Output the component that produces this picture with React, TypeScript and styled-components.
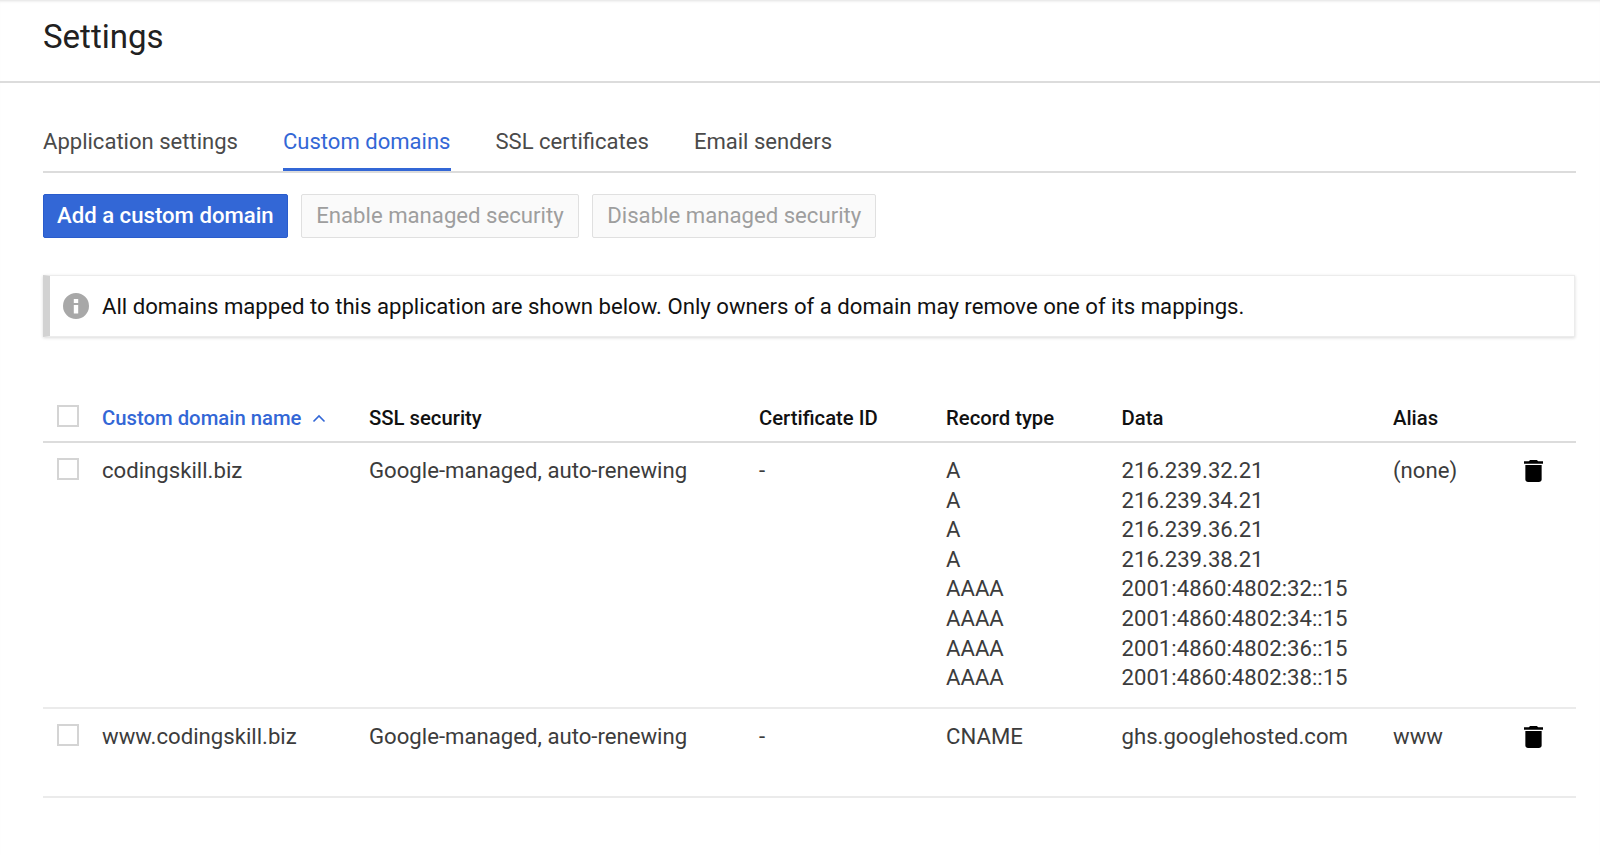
import React from 'react';
import styled, { createGlobalStyle } from 'styled-components';

const Global = createGlobalStyle`
  html, body { margin: 0; padding: 0; background: #fff; }
  body { font-family: Roboto, "Liberation Sans", sans-serif; color: #3c3c3c; overflow: hidden; }
`;
const Page = styled.div`
  width: 1600px;
  height: 855px;
  box-shadow: inset 0 3px 3px -2px rgba(0,0,0,.12);
`;
const Header = styled.header`
  height: 83px;
  box-sizing: border-box;
  border-bottom: 2px solid #dcdcdc;
  padding: 17px 43px 0;
`;
const Title = styled.h1`
  margin: 0;
  font-size: 33px;
  line-height: 40px;
  font-weight: 400;
  color: #212121;
`;
const Content = styled.main`
  padding: 44px 24px 0 43px;
`;
const Tabs = styled.nav`
  display: flex;
  gap: 45px;
  height: 46px;
  box-sizing: border-box;
  border-bottom: 2px solid #dcdcdc;
`;
const Tab = styled.div<{ $active?: boolean }>`
  height: 44px;
  box-sizing: border-box;
  font-size: 22.05px;
  line-height: 29px;
  color: ${p => (p.$active ? '#3367d6' : '#4a4a4a')};
  border-bottom: ${p => (p.$active ? '3px solid #3367d6' : '0')};
`;
const Toolbar = styled.div`
  display: flex;
  gap: 13.5px;
  margin-top: 21px;
`;
const Button = styled.button<{ $primary?: boolean }>`
  height: 44px;
  padding: 0 ${p => (p.$primary ? 13 : 14)}px 2px;
  border-radius: 2px;
  font-family: inherit;
  font-size: 22.16px;
  border: 1px solid ${p => (p.$primary ? '#2a5ccc' : '#e0e0e0')};
  background: ${p => (p.$primary ? '#3367d6' : '#fafafa')};
  color: ${p => (p.$primary ? '#fff' : '#9e9e9e')};
  font-weight: ${p => (p.$primary ? 500 : 400)};
`;
const Notice = styled.div`
  margin: 37px 1px 0 0;
  height: 62px;
  box-sizing: border-box;
  display: flex;
  align-items: center;
  gap: 13px;
  padding-left: 13px;
  border: 1px solid #ececec;
  border-left: 7px solid #d2d2d2;
  box-shadow: 0 1px 3px rgba(0,0,0,.15);
  font-size: 22.16px;
  color: #111;
`;
const InfoIcon = styled.svg`
  width: 26px;
  height: 26px;
  fill: #a8a8a8;
  flex: none;
`;
const GridRow = styled.div<{ $head?: boolean; $pad?: number; $h?: number }>`
  display: grid;
  grid-template-columns: 59px 267px 390px 187px 175.5px 271.5px 131px 1fr;
  box-sizing: border-box;
  padding-top: ${p => p.$pad ?? 13}px;
  height: ${p => p.$h}px;
  border-bottom: 2px solid ${p => (p.$head ? '#dcdcdc' : '#ebebeb')};
  font-size: 22.16px;
  line-height: 29.6px;
`;
const Head = styled(GridRow)`
  margin-top: 55px;
  font-weight: 500;
  font-size: 20.3px;
  color: #111;
`;
const Cell = styled.div``;
const CheckCell = styled.div<{ $top: number }>`
  padding: ${p => p.$top}px 0 0 14px;
`;
const Check = styled.div`
  width: 22px;
  height: 22px;
  box-sizing: border-box;
  border: 2px solid #d4d4d4;
`;
const SortCell = styled.div`
  color: #3367d6;
  display: flex;
  align-items: center;
  gap: 11px;
  height: 29.6px;
`;
const Chevron = styled.svg`
  width: 14px;
  height: 9px;
  fill: none;
  stroke: #3367d6;
  stroke-width: 1.6;
`;
const TrashCell = styled.div`
  padding-top: 4px;
`;
const Trash = styled.svg`
  display: block;
  width: 19px;
  height: 22px;
  fill: #000;
`;

const TrashIcon = () => (
  <Trash viewBox="5 3 14 18" preserveAspectRatio="none">
    <path d="M6 19c0 1.1.9 2 2 2h8c1.1 0 2-.9 2-2V7H6v12zM19 4h-3.5l-1-1h-5l-1 1H5v2h14V4z" />
  </Trash>
);
const lines = (items: string[]) => items.map((t, i) => <div key={i}>{t}</div>);

export default function App() {
  return (
    <Page>
      <Global />
      <Header><Title>Settings</Title></Header>
      <Content>
        <Tabs>
          <Tab>Application settings</Tab>
          <Tab $active>Custom domains</Tab>
          <Tab>SSL certificates</Tab>
          <Tab>Email senders</Tab>
        </Tabs>
        <Toolbar>
          <Button $primary>Add a custom domain</Button>
          <Button>Enable managed security</Button>
          <Button>Disable managed security</Button>
        </Toolbar>
        <Notice>
          <InfoIcon viewBox="0 0 26 26">
            <path fillRule="evenodd" d="M13 0a13 13 0 1 0 0 26a13 13 0 1 0 0-26zM10.8 6h4.4v4h-4.4zM10.8 12h4.4v8.5h-4.4z" />
          </InfoIcon>
          All domains mapped to this application are shown below. Only owners of a domain may remove one of its mappings.
        </Notice>
        <Head $head $h={51} $pad={12}>
          <CheckCell $top={1}><Check /></CheckCell>
          <SortCell>
            Custom domain name
            <Chevron viewBox="0 0 14 9"><polyline points="1.5,7.5 7,2 12.5,7.5" /></Chevron>
          </SortCell>
          <Cell>SSL security</Cell>
          <Cell>Certificate ID</Cell>
          <Cell>Record type</Cell>
          <Cell>Data</Cell>
          <Cell>Alias</Cell>
        </Head>
        <GridRow $h={266} $pad={13}>
          <CheckCell $top={2}><Check /></CheckCell>
          <Cell>codingskill.biz</Cell>
          <Cell>Google-managed, auto-renewing</Cell>
          <Cell>-</Cell>
          <Cell>{lines(['A', 'A', 'A', 'A', 'AAAA', 'AAAA', 'AAAA', 'AAAA'])}</Cell>
          <Cell>{lines(['216.239.32.21', '216.239.34.21', '216.239.36.21', '216.239.38.21', '2001:4860:4802:32::15', '2001:4860:4802:34::15', '2001:4860:4802:36::15', '2001:4860:4802:38::15'])}</Cell>
          <Cell>(none)</Cell>
          <TrashCell><TrashIcon /></TrashCell>
        </GridRow>
        <GridRow $h={89} $pad={13}>
          <CheckCell $top={2}><Check /></CheckCell>
          <Cell>www.codingskill.biz</Cell>
          <Cell>Google-managed, auto-renewing</Cell>
          <Cell>-</Cell>
          <Cell>CNAME</Cell>
          <Cell>ghs.googlehosted.com</Cell>
          <Cell>www</Cell>
          <TrashCell><TrashIcon /></TrashCell>
        </GridRow>
      </Content>
    </Page>
  );
}
